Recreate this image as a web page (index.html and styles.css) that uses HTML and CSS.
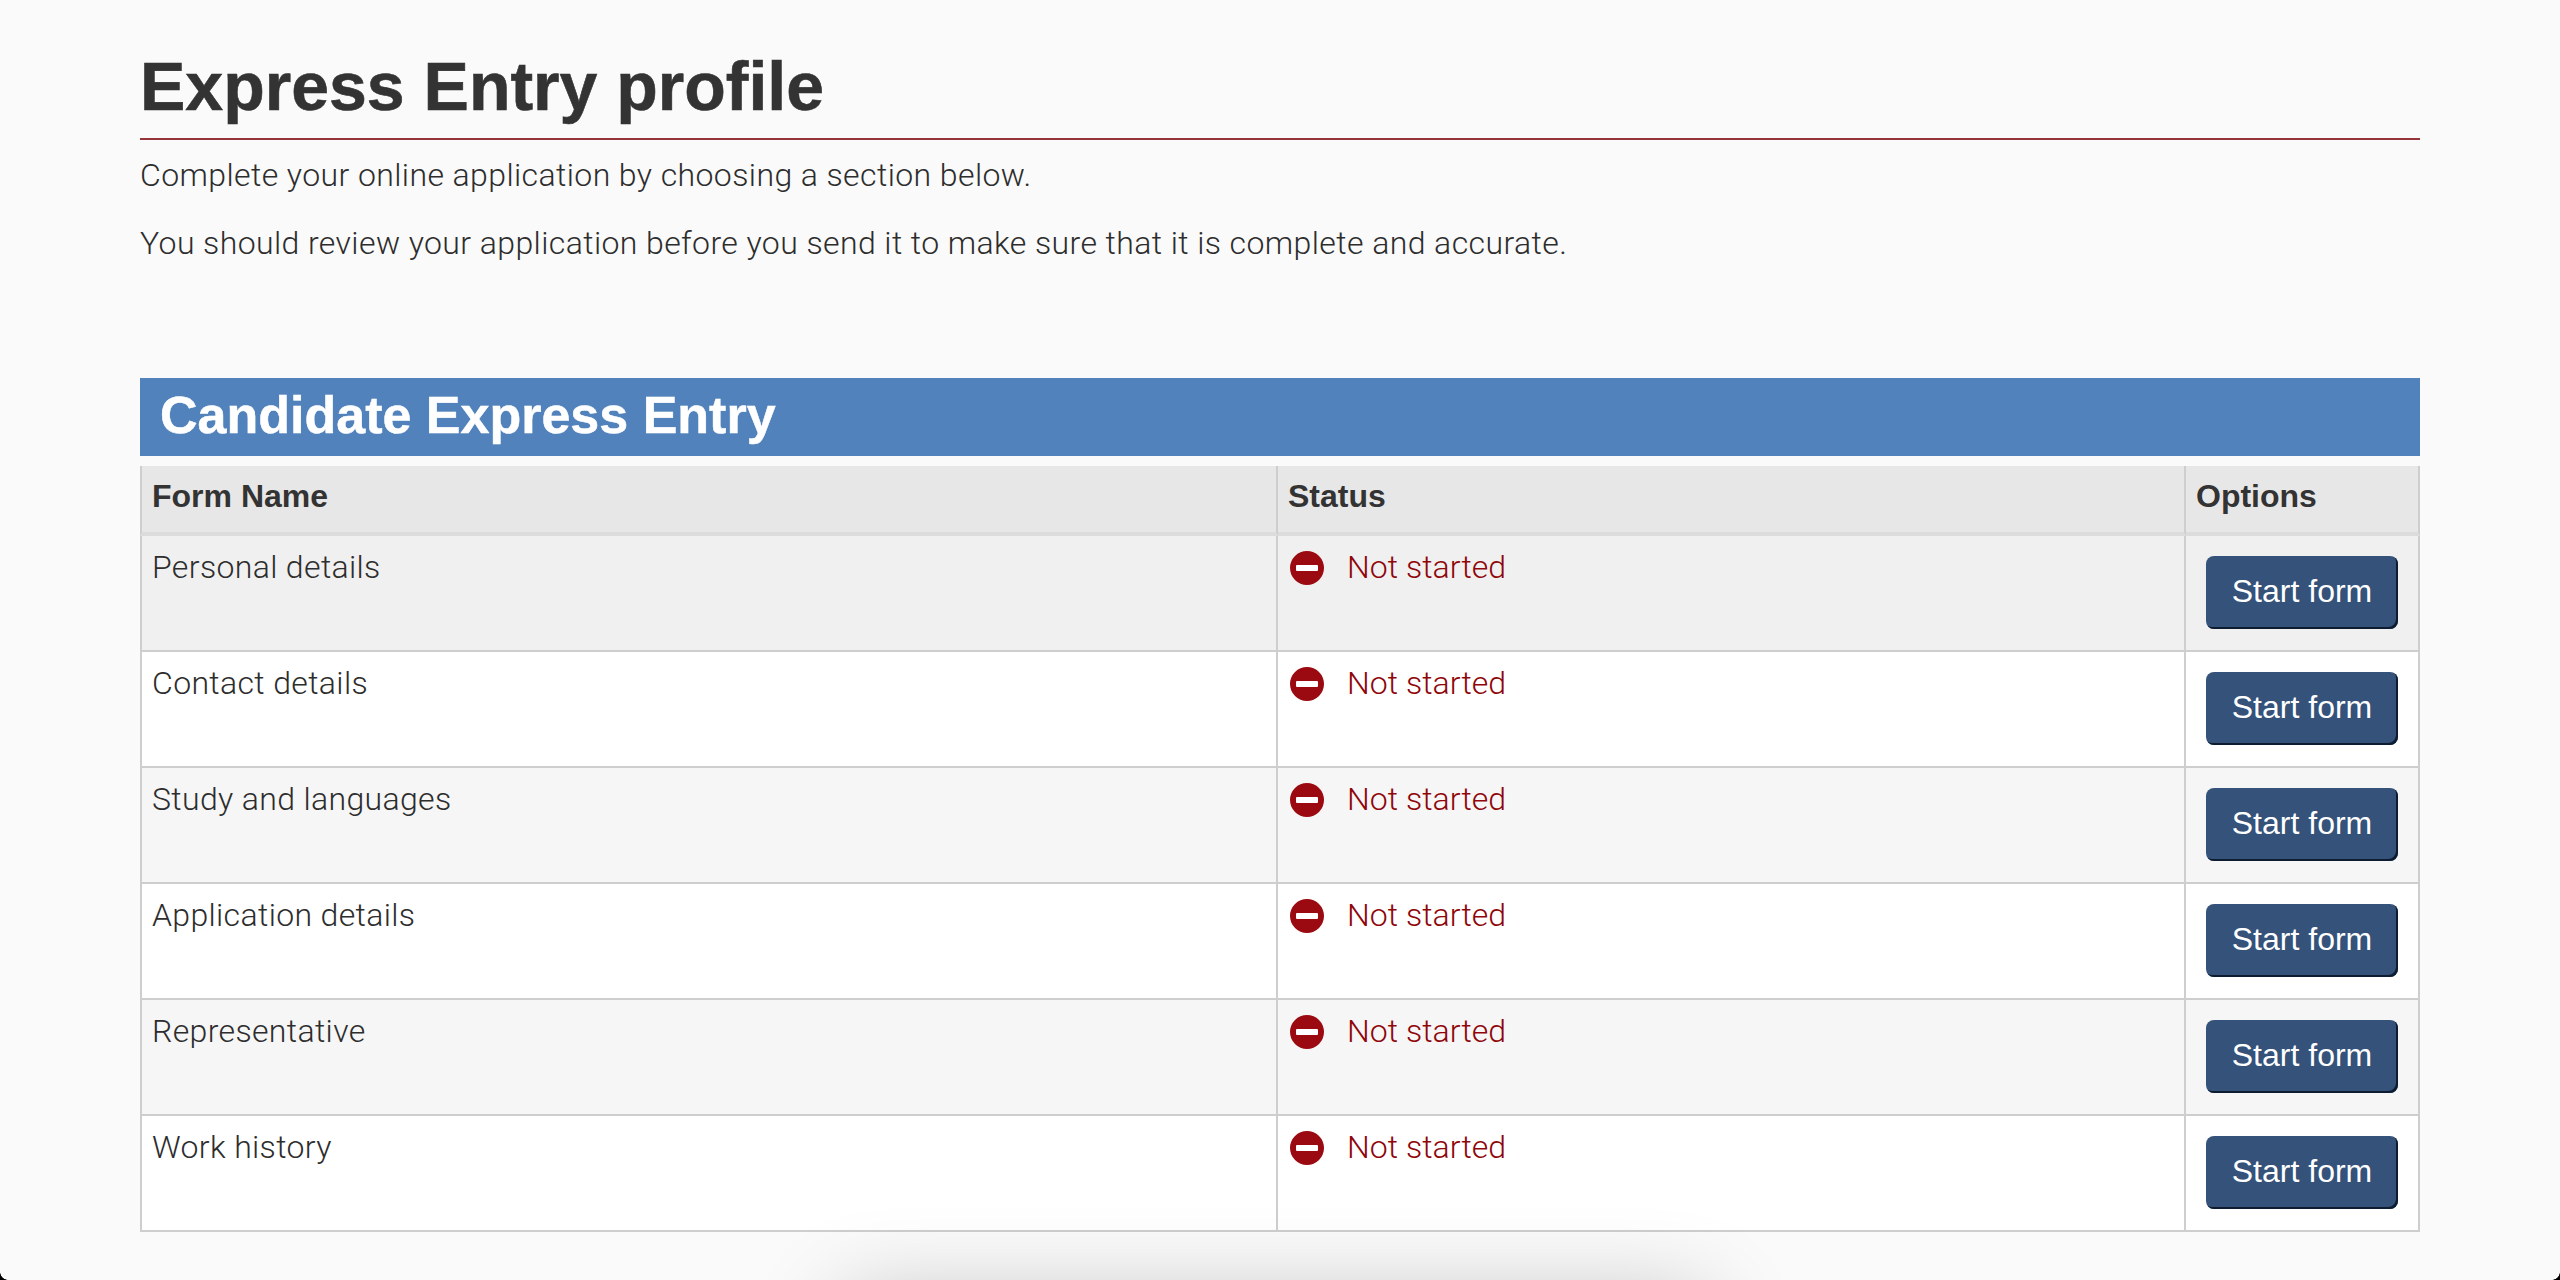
FILE: index.html
```html
<!DOCTYPE html>
<html lang="en">
<head>
<meta charset="utf-8">
<title>Express Entry profile</title>
<link rel="stylesheet" href="styles.css">
</head>
<body>
<main class="page">
  <h1 class="title">Express Entry profile</h1>
  <p class="intro">Complete your online application by choosing a section below.</p>
  <p class="intro intro-last">You should review your application before you send it to make sure that it is complete and accurate.</p>
  <h2 class="section">Candidate Express Entry</h2>
  <table class="forms">
    <colgroup><col class="c-name"><col class="c-status"><col class="c-options"></colgroup>
    <thead>
      <tr><th>Form Name</th><th>Status</th><th>Options</th></tr>
    </thead>
    <tbody>
      <tr class="row-hover">
        <td>Personal details</td>
        <td><div class="status"><svg class="status-icon" viewBox="0 0 34 34"><circle cx="17" cy="17" r="17" fill="#9a0a10"/><rect x="6" y="14" width="22" height="6" rx="1" fill="#fff"/></svg><span>Not started</span></div></td>
        <td class="opt"><button class="start">Start form</button></td>
      </tr>
      <tr>
        <td>Contact details</td>
        <td><div class="status"><svg class="status-icon" viewBox="0 0 34 34"><circle cx="17" cy="17" r="17" fill="#9a0a10"/><rect x="6" y="14" width="22" height="6" rx="1" fill="#fff"/></svg><span>Not started</span></div></td>
        <td class="opt"><button class="start">Start form</button></td>
      </tr>
      <tr class="row-alt">
        <td>Study and languages</td>
        <td><div class="status"><svg class="status-icon" viewBox="0 0 34 34"><circle cx="17" cy="17" r="17" fill="#9a0a10"/><rect x="6" y="14" width="22" height="6" rx="1" fill="#fff"/></svg><span>Not started</span></div></td>
        <td class="opt"><button class="start">Start form</button></td>
      </tr>
      <tr>
        <td>Application details</td>
        <td><div class="status"><svg class="status-icon" viewBox="0 0 34 34"><circle cx="17" cy="17" r="17" fill="#9a0a10"/><rect x="6" y="14" width="22" height="6" rx="1" fill="#fff"/></svg><span>Not started</span></div></td>
        <td class="opt"><button class="start">Start form</button></td>
      </tr>
      <tr class="row-alt">
        <td>Representative</td>
        <td><div class="status"><svg class="status-icon" viewBox="0 0 34 34"><circle cx="17" cy="17" r="17" fill="#9a0a10"/><rect x="6" y="14" width="22" height="6" rx="1" fill="#fff"/></svg><span>Not started</span></div></td>
        <td class="opt"><button class="start">Start form</button></td>
      </tr>
      <tr>
        <td>Work history</td>
        <td><div class="status"><svg class="status-icon" viewBox="0 0 34 34"><circle cx="17" cy="17" r="17" fill="#9a0a10"/><rect x="6" y="14" width="22" height="6" rx="1" fill="#fff"/></svg><span>Not started</span></div></td>
        <td class="opt"><button class="start">Start form</button></td>
      </tr>
    </tbody>
  </table>
</main>
<div class="dock-shadow"></div>
<div class="corner corner-left"></div>
<div class="corner corner-right"></div>
</body>
</html>
```
FILE: styles.css
```css
html, body {
  margin: 0;
  height: 1280px;
  overflow: hidden;
  background: #fafafa;
}
body {
  font-family: "Liberation Sans", Arial, sans-serif;
  font-size: 32px;
  line-height: 44px;
  color: #333;
}
.page {
  width: 2280px;
  margin: 0 auto;
}
.title {
  margin: 0;
  padding: 48px 0 14px;
  font-size: 68px;
  line-height: 76px;
  font-weight: 700;
  color: #333;
  -webkit-text-stroke: .6px #333;
  border-bottom: 2px solid #96343c;
}
.intro, .forms td {
  font-family: Roboto, "Liberation Sans", Arial, sans-serif;
  font-weight: 300;
}
.intro {
  margin: 13px 0 24px;
  color: #2d2d2d;
  letter-spacing: .4px;
}
.intro + .intro { margin-top: 0; }
.intro-last { margin-bottom: 113px; }
.section {
  margin: 0 0 10px;
  padding: 0 0 4px 20px;
  background: #5182bb;
  color: #fff;
  font-size: 52px;
  line-height: 74px;
  font-weight: 700;
  -webkit-text-stroke: .5px #fff;
}
.forms {
  width: 2280px;
  table-layout: fixed;
  border-collapse: separate;
  border-spacing: 0;
  background: #fff;
}
.c-name { width: 1138px; }
.c-status { width: 908px; }
.c-options { width: 234px; }
.forms th, .forms td {
  text-align: left;
  vertical-align: top;
  border-right: 2px solid #cecece;
  color: #2d2d2d;
}
.forms th:first-child, .forms td:first-child { border-left: 2px solid #cecece; }
.forms th {
  height: 44px;
  padding: 8px 10px 14px;
  background: #e7e7e7;
  border-bottom: 4px solid #dcdcdc;
  color: #333;
  font-weight: 700;
}
.forms td {
  height: 105px;
  padding: 9px 10px 0;
  border-bottom: 2px solid #cecece;
  letter-spacing: .35px;
}
.row-hover td { background: #f0f0f0; }
.row-alt td { background: #f6f6f6; }
.status {
  display: flex;
  align-items: flex-start;
  color: #8f0509;
  letter-spacing: .05px;
}
.status-icon {
  flex: none;
  width: 34px;
  height: 34px;
  margin: 6px 23px 0 2px;
}
.forms td.opt {
  height: 94px;
  padding: 20px 20px 0;
}
.start {
  display: block;
  width: 192px;
  height: 73px;
  padding: 0 0 4px;
  border: 0;
  border-radius: 8px;
  background: #34527a;
  box-shadow: inset -2px -2px 0 #0d1c30;
  color: #fff;
  font-family: "Liberation Sans", Arial, sans-serif;
  font-size: 32px;
  line-height: 44px;
}
.dock-shadow {
  position: fixed;
  left: 842px;
  top: 1298px;
  width: 866px;
  height: 100px;
  box-shadow: 0 0 90px rgba(0, 0, 0, .23);
  pointer-events: none;
}
.corner {
  position: fixed;
  bottom: 0;
  width: 8px;
  height: 8px;
}
.corner-left {
  left: 0;
  background: radial-gradient(circle at 100% 0, transparent 7.5px, #000 8px);
}
.corner-right {
  right: 0;
  background: radial-gradient(circle at 0 0, transparent 7.5px, #000 8px);
}
```
